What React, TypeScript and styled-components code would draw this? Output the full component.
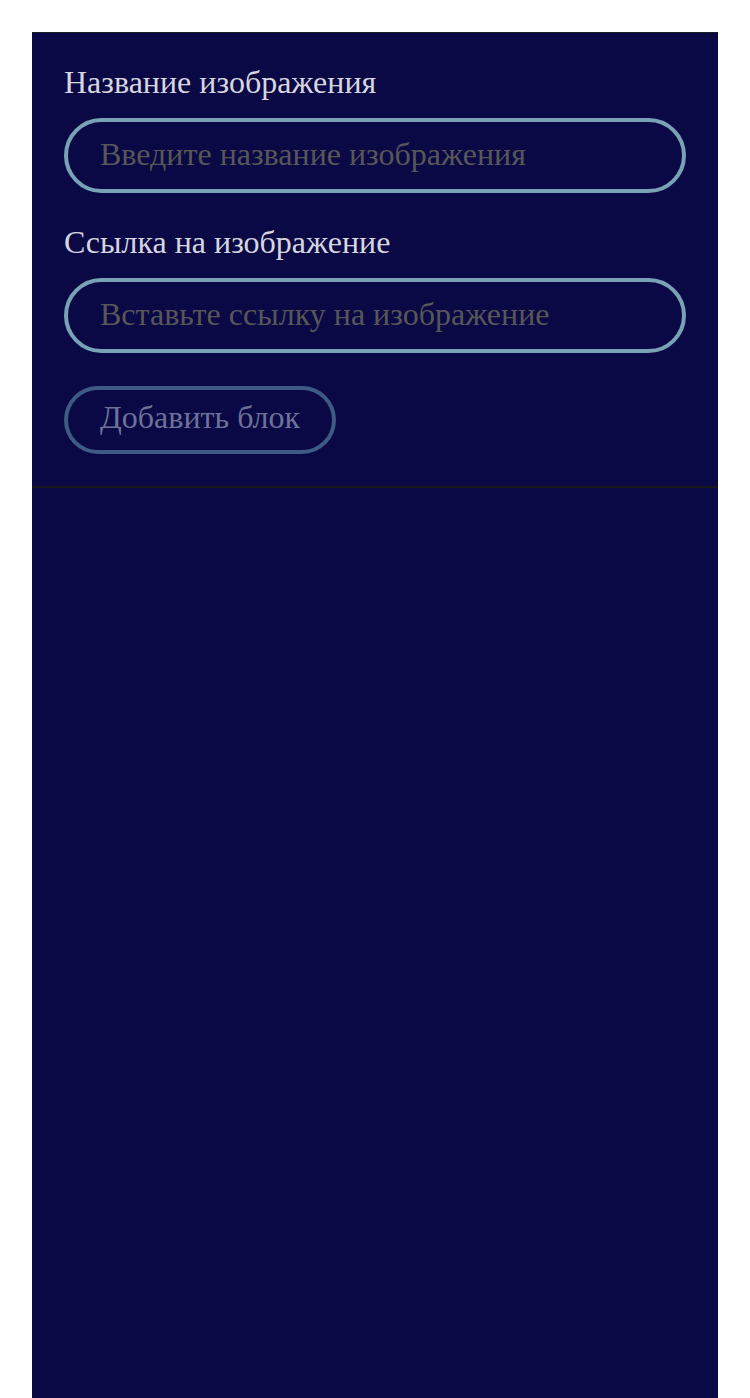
import React from "react";
import styled, { createGlobalStyle } from "styled-components";

const Global = createGlobalStyle`
  html, body { margin: 0; padding: 0; background: #ffffff; }
  body { font-family: "Liberation Serif", "Times New Roman", serif; }
  * { box-sizing: border-box; }
`;

const Page = styled.div`
  padding: 32px 32px 0 32px;
`;

const Panel = styled.div`
  background: #0a0845;
  border-top: 1px solid #1b1e24;
  min-height: 1366px;
  display: flex;
  flex-direction: column;
`;

const Form = styled.form`
  display: flex;
  flex-direction: column;
  padding: 32px;
  border-bottom: 2px solid #18191b;
`;

const Field = styled.div`
  display: flex;
  flex-direction: column;
  gap: 19px;
  margin-bottom: 32px;
`;

const Label = styled.label`
  color: #d6d6de;
  font-family: "Liberation Serif", "Times New Roman", serif;
  font-size: 32px;
  line-height: 34px;
`;

const Input = styled.input`
  height: 75px;
  width: 100%;
  border: 4px solid #78a3b6;
  border-radius: 40px;
  background: transparent;
  padding: 0 32px 3px 32px;
  font-family: "Liberation Serif", "Times New Roman", serif;
  font-size: 32px;
  color: #dcdce6;
  outline: none;
  &::placeholder { color: #575757; }
`;

const Button = styled.button`
  align-self: flex-start;
  height: 68px;
  margin-top: 1px;
  padding: 0 32px 5px 32px;
  border: 4px solid #3d5b84;
  border-radius: 34px;
  background: transparent;
  color: #6d7299;
  font-family: "Liberation Serif", "Times New Roman", serif;
  font-size: 32px;
  cursor: pointer;
`;

export default function App() {
  return (
    <>
      <Global />
      <Page>
        <Panel>
          <Form onSubmit={(e) => e.preventDefault()}>
            <Field>
              <Label>Название изображения</Label>
              <Input placeholder="Введите название изображения" />
            </Field>
            <Field>
              <Label>Ссылка на изображение</Label>
              <Input placeholder="Вставьте ссылку на изображение" />
            </Field>
            <Button type="submit">Добавить блок</Button>
          </Form>
        </Panel>
      </Page>
    </>
  );
}
